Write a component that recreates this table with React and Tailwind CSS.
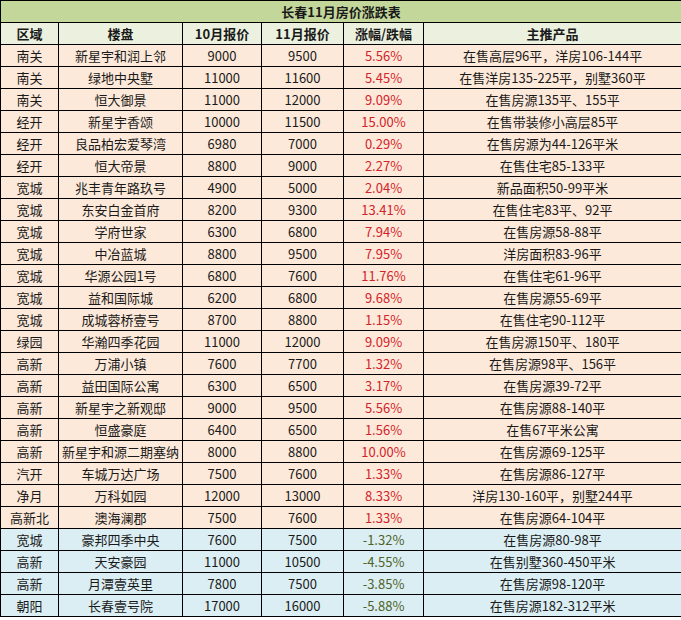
import React from "react";

const up = [
  ["南关", "新星宇和润上邻", "9000", "9500", "5.56%", "在售高层96平，洋房106-144平"],
  ["南关", "绿地中央墅", "11000", "11600", "5.45%", "在售洋房135-225平，别墅360平"],
  ["南关", "恒大御景", "11000", "12000", "9.09%", "在售房源135平、155平"],
  ["经开", "新星宇香颂", "10000", "11500", "15.00%", "在售带装修小高层85平"],
  ["经开", "良品柏宏爱琴湾", "6980", "7000", "0.29%", "在售房源为44-126平米"],
  ["经开", "恒大帝景", "8800", "9000", "2.27%", "在售住宅85-133平"],
  ["宽城", "兆丰青年路玖号", "4900", "5000", "2.04%", "新品面积50-99平米"],
  ["宽城", "东安白金首府", "8200", "9300", "13.41%", "在售住宅83平、92平"],
  ["宽城", "学府世家", "6300", "6800", "7.94%", "在售房源58-88平"],
  ["宽城", "中冶蓝城", "8800", "9500", "7.95%", "洋房面积83-96平"],
  ["宽城", "华源公园1号", "6800", "7600", "11.76%", "在售住宅61-96平"],
  ["宽城", "益和国际城", "6200", "6800", "9.68%", "在售房源55-69平"],
  ["宽城", "成城蓉桥壹号", "8700", "8800", "1.15%", "在售住宅90-112平"],
  ["绿园", "华瀚四季花园", "11000", "12000", "9.09%", "在售房源150平、180平"],
  ["高新", "万浦小镇", "7600", "7700", "1.32%", "在售房源98平、156平"],
  ["高新", "益田国际公寓", "6300", "6500", "3.17%", "在售房源39-72平"],
  ["高新", "新星宇之新观邸", "9000", "9500", "5.56%", "在售房源88-140平"],
  ["高新", "恒盛豪庭", "6400", "6500", "1.56%", "在售67平米公寓"],
  ["高新", "新星宇和源二期塞纳", "8000", "8800", "10.00%", "在售房源69-125平"],
  ["汽开", "车城万达广场", "7500", "7600", "1.33%", "在售房源86-127平"],
  ["净月", "万科如园", "12000", "13000", "8.33%", "洋房130-160平，别墅244平"],
  ["高新北", "澳海澜郡", "7500", "7600", "1.33%", "在售房源64-104平"],
];

const down = [
  ["宽城", "豪邦四季中央", "7600", "7500", "-1.32%", "在售房源80-98平"],
  ["高新", "天安豪园", "11000", "10500", "-4.55%", "在售别墅360-450平米"],
  ["高新", "月潭壹英里", "7800", "7500", "-3.85%", "在售房源98-120平"],
  ["朝阳", "长春壹号院", "17000", "16000", "-5.88%", "在售房源182-312平米"],
];

const td = "border border-black p-0 text-center whitespace-nowrap leading-[21px]";

function Row({ r, bg, pct }) {
  return (
    <tr className={`h-[22px] ${bg}`}>
      <td className={td}>{r[0]}</td>
      <td className={td}>{r[1]}</td>
      <td className={td}>{r[2]}</td>
      <td className={td}>{r[3]}</td>
      <td className={`${td} ${pct}`}>{r[4]}</td>
      <td className={td}>{r[5]}</td>
    </tr>
  );
}

export default function App() {
  return (
    <div className="w-[681px] h-[620px] bg-white overflow-hidden text-[13px] text-[#1a1a1a] font-['Noto_Sans_CJK_SC','Microsoft_YaHei',sans-serif]">
      <table className="border-collapse table-fixed w-[681px]">
        <colgroup>
          <col className="w-[58px]" />
          <col className="w-[124px]" />
          <col className="w-[79px]" />
          <col className="w-[82px]" />
          <col className="w-[80px]" />
          <col className="w-[258px]" />
        </colgroup>
        <tbody>
          <tr className="h-[22px] bg-[#c4d79b]">
            <td colSpan={6} className={`${td} font-bold`}>长春11月房价涨跌表</td>
          </tr>
          <tr className="h-[22px] bg-[#ebf1de] font-bold">
            <td className={td}>区域</td>
            <td className={td}>楼盘</td>
            <td className={td}>10月报价</td>
            <td className={td}>11月报价</td>
            <td className={td}>涨幅/跌幅</td>
            <td className={td}>主推产品</td>
          </tr>
          {up.map((r, i) => (
            <Row key={"u" + i} r={r} bg="bg-[#fde9d9]" pct="text-[#d2232a]" />
          ))}
          {down.map((r, i) => (
            <Row key={"d" + i} r={r} bg="bg-[#daeef3]" pct="text-[#4f6228]" />
          ))}
        </tbody>
      </table>
    </div>
  );
}
